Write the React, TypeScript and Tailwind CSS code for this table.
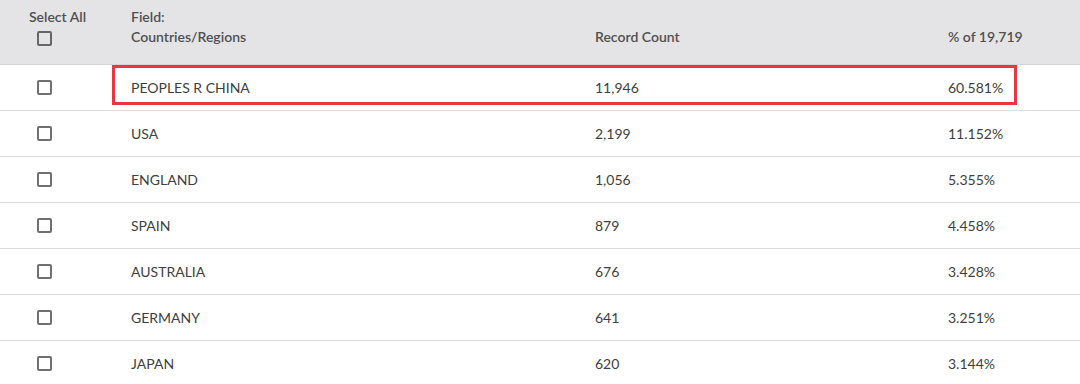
import React from "react";

const rows = [
  { name: "PEOPLES R CHINA", count: "11,946", pct: "60.581%" },
  { name: "USA", count: "2,199", pct: "11.152%" },
  { name: "ENGLAND", count: "1,056", pct: "5.355%" },
  { name: "SPAIN", count: "879", pct: "4.458%" },
  { name: "AUSTRALIA", count: "676", pct: "3.428%" },
  { name: "GERMANY", count: "641", pct: "3.251%" },
  { name: "JAPAN", count: "620", pct: "3.144%" },
];

function Box() {
  return <span className="block h-[15px] w-[15px] rounded-[2px] border-2 border-[#707070] bg-white" />;
}

export default function App() {
  return (
    <div className="h-[384px] w-[1080px] overflow-hidden bg-white text-[14px] text-[#3e3e3e] [font-family:Lato,'Noto_Sans',sans-serif]">
      {/* header */}
      <div className="flex h-[65px] border-b border-[#d6d6d8] bg-[#e4e4e6] font-semibold text-[#505050]">
        <div className="flex w-[88px] flex-col pl-[29px] pt-[7px]">
          <span className="leading-[20px]">Select All</span>
          <span className="ml-[8px] mt-[4px]">
            <span className="block h-[15px] w-[15px] rounded-[2px] border-2 border-[#666]" />
          </span>
        </div>
        <div className="flex w-[507px] flex-col pl-[43px] pt-[7px] leading-[20px]">
          <span>Field:</span>
          <span>Countries/Regions</span>
        </div>
        <div className="w-[353px] pt-[27px] leading-[20px]">Record Count</div>
        <div className="flex-1 pt-[27px] leading-[20px]">% of 19,719</div>
      </div>

      {rows.map((r, i) => (
        <div key={r.name} className="relative flex h-[46px] items-center border-b border-[#dcdcdc]">
          <div className="flex w-[88px] justify-center">
            <Box />
          </div>
          <div className="w-[507px] pl-[43px]">{r.name}</div>
          <div className="w-[353px]">{r.count}</div>
          <div className="flex-1">{r.pct}</div>
          {i === 0 && (
            <div className="absolute left-[112px] top-0 h-[40px] w-[905px] border-[3px] border-[#e5393f]" />
          )}
        </div>
      ))}
    </div>
  );
}
